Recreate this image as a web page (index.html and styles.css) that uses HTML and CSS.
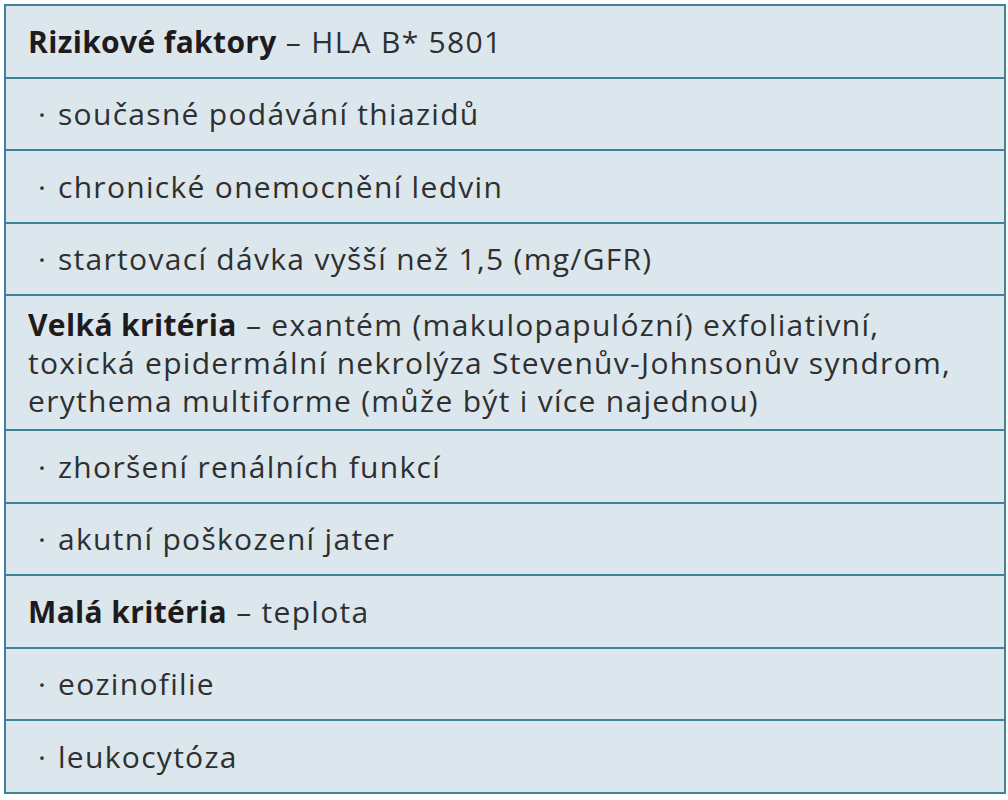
FILE: index.html
```html
<!DOCTYPE html>
<html lang="cs">
<head>
<meta charset="utf-8">
<link rel="stylesheet" href="styles.css">
</head>
<body>
<div class="table">
  <div class="row"><b>Rizikové faktory</b> – HLA B* 5801</div>
  <div class="row sub"><span class="dot">·</span>současné podávání thiazidů</div>
  <div class="row sub"><span class="dot">·</span>chronické onemocnění ledvin</div>
  <div class="row sub"><span class="dot">·</span>startovací dávka vyšší než 1,5 (mg/GFR)</div>
  <div class="row multi"><b>Velká kritéria</b> – exantém (makulopapulózní) exfoliativní,<br>toxická epidermální nekrolýza Stevenův-Johnsonův syndrom,<br>erythema multiforme (může být i více najednou)</div>
  <div class="row sub"><span class="dot">·</span>zhoršení renálních funkcí</div>
  <div class="row sub"><span class="dot">·</span>akutní poškození jater</div>
  <div class="row"><b>Malá kritéria</b> – teplota</div>
  <div class="row sub"><span class="dot">·</span>eozinofilie</div>
  <div class="row sub"><span class="dot">·</span>leukocytóza</div>
</div>
</body>
</html>
```

FILE: styles.css
```css
html, body {
  margin: 0;
  padding: 0;
  background: #ffffff;
}
.table {
  margin: 4px 2px 0 4px;
  border: 2px solid #3f8397;
  background: #dbe7ec;
  display: flex;
  flex-direction: column;
  font-family: "Open Sans", "Noto Sans", sans-serif;
  font-size: 30px;
  line-height: 38px;
  letter-spacing: 1.3px;
  color: #2f2f31;
}
.row {
  padding: 16.5px 16px 16px 22px;
  border-bottom: 2px solid #3f8397;
  white-space: nowrap;
}
.row:last-child {
  border-bottom: none;
}
.row b {
  font-weight: 700;
  letter-spacing: 0.35px;
  color: #1f1b1c;
}
.row.multi {
  padding-top: 9.5px;
  padding-bottom: 9.5px;
}
.dot {
  display: inline-block;
  width: 20px;
  padding-left: 10px;
  letter-spacing: 0;
}
```
